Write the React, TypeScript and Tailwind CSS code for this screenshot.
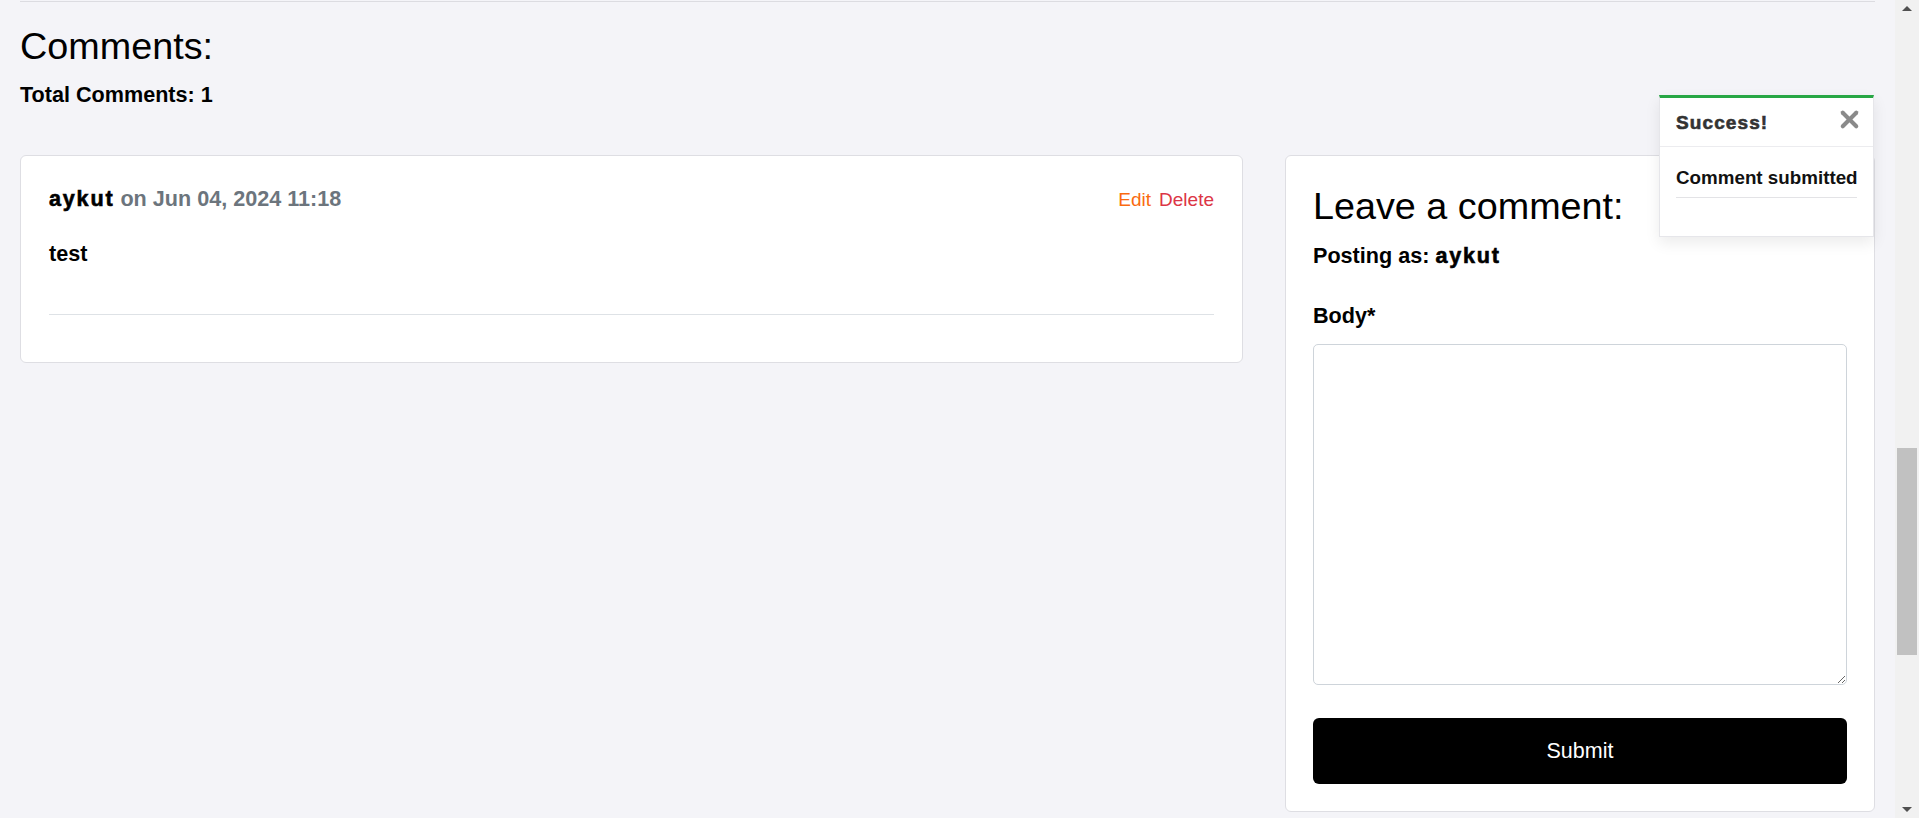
import { X } from "lucide-react";

const blackish = "font-bold tracking-[1.8px] [-webkit-text-stroke:0.6px_currentColor]";

function CommentCard() {
    return (
        <div className="rounded-[6px] border border-[#dedee3] bg-white px-[28px] pt-[30px] pb-[47px]">
            <div className="flex items-baseline justify-between leading-[26px]">
                <h5 className="text-[21.6px] font-bold">
                    <span className={`text-black ${blackish}`}>aykut</span>{" "}
                    <span className="text-[#6c757d]">on Jun 04, 2024 11:18</span>
                </h5>
                <div className="flex gap-[8px] text-[19px]">
                    <a className="text-[#fa6a10] cursor-pointer">Edit</a>
                    <a className="text-[#dc3545] cursor-pointer">Delete</a>
                </div>
            </div>
            <p className="mt-[28px] text-[21.6px] font-bold leading-[26px] text-black">test</p>
            <hr className="mt-[47px] border-t border-[#dee2e6]" />
        </div>
    );
}

function CommentForm() {
    return (
        <div className="rounded-[6px] border border-[#dedee3] bg-white px-[27px] pt-[28px] pb-[27px]">
            <h3 className="text-[37.75px] leading-[44px] text-black">Leave a comment:</h3>
            <p className="mt-[15px] text-[21.6px] font-bold leading-[26px] text-black">
                Posting as: <span className={blackish}>aykut</span>
            </p>
            <label className="mt-[34px] block text-[21.6px] font-bold leading-[26px] text-black">Body*</label>
            <textarea className="mt-[15px] block h-[341px] w-full rounded-[5px] border border-[#ced4da] bg-white" />
            <button className="mt-[33px] h-[66px] w-full rounded-[6px] bg-black text-[21.5px] text-white">
                Submit
            </button>
        </div>
    );
}

function Toast() {
    return (
        <div className="absolute top-[95px] right-[21px] w-[215px] border-t-[3px] border-t-[#28a745] border-x border-b border-x-[#e6e6ea] border-b-[#e6e6ea] bg-white shadow-[0_6px_14px_rgba(0,0,0,0.08)]">
            <div className="flex h-[49px] items-center justify-between border-b border-[#ececef] pl-[16px] pr-[10px]">
                <strong className="text-[19px] font-bold leading-[23px] tracking-[1.1px] text-[#333] [-webkit-text-stroke:0.6px_currentColor]">
                    Success!
                </strong>
                <X size={27} strokeWidth={3.6} color="#8a8a8a" className="-mt-[6px]" />
            </div>
            <div className="px-[16px] pt-[19px] pb-[38px]">
                <p className="whitespace-nowrap border-b border-[#e3e3e6] pb-[8px] text-[18.8px] font-bold leading-[23px] text-[#111]">
                    Comment submitted
                </p>
            </div>
        </div>
    );
}

function Scrollbar() {
    return (
        <div className="flex w-[24px] flex-col items-center bg-[#f1f1f1]">
            <svg width="10" height="5" viewBox="0 0 10 5" className="mt-[6px]">
                <polygon points="0,5 5,0 10,5" fill="#505050" />
            </svg>
            <div className="mt-[437px] h-[207px] w-[20px] bg-[#c1c1c1]" />
            <div className="flex-1" />
            <svg width="10" height="5" viewBox="0 0 10 5" className="mb-[6px]">
                <polygon points="0,0 10,0 5,5" fill="#505050" />
            </svg>
        </div>
    );
}

export default function App() {
    return (
        <div className="flex h-[818px] overflow-hidden bg-[#f4f4f8] font-['Liberation_Sans',Arial,sans-serif]">
            <div className="relative min-w-0 flex-1 px-[20px]">
                <hr className="mt-px border-t border-[#dcdce1]" />
                <h2 className="mt-[22px] text-[37.75px] leading-[44px] text-black">Comments:</h2>
                <p className="mt-[14px] text-[21.6px] font-bold leading-[26px] text-black">Total Comments: 1</p>
                <div className="mt-[47px] grid grid-cols-[minmax(0,1fr)_590px] items-start gap-[42px]">
                    <CommentCard />
                    <CommentForm />
                </div>
                <Toast />
            </div>
            <Scrollbar />
        </div>
    );
}
